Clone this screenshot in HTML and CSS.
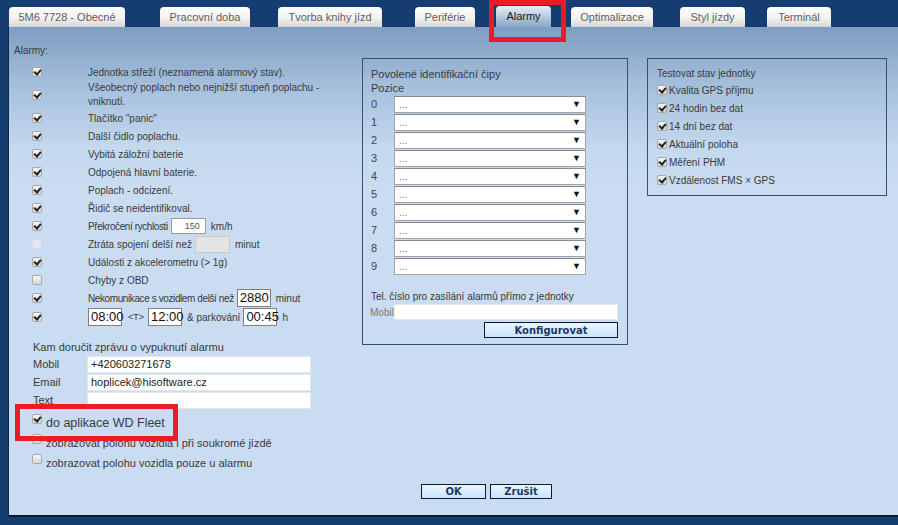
FILE: index.html
```html
<!DOCTYPE html>
<html lang="cs">
  <head>
    <meta charset="UTF-8" />
    <title>Alarmy</title>
    <link rel="stylesheet" href="styles.css">
  </head>
  <body>
    <div class="tabs">
      <div class="tab t1">5M6 7728 - Obecné</div>
      <div class="tab t2">Pracovní doba</div>
      <div class="tab t3">Tvorba knihy jízd</div>
      <div class="tab t4">Periférie</div>
      <div class="tab t5 active">Alarmy</div>
      <div class="tab t6">Optimalizace</div>
      <div class="tab t7">Styl jízdy</div>
      <div class="tab t8">Terminál</div>
    </div>
    <div class="mark mark-tab"></div>

    <div class="panel">
      <div class="content">
        <div class="col-left">
          <div class="caption">Alarmy:</div>

          <div class="row"><span class="cbc"><span class="cb on"></span></span><span>Jednotka střeží (neznamená alarmový stav).</span></div>
          <div class="row tall"><span class="cbc"><span class="cb on"></span></span><span>Všeobecný poplach nebo nejnižší stupeň poplachu -<br>vniknutí.</span></div>
          <div class="row"><span class="cbc"><span class="cb on"></span></span><span>Tlačítko "panic"</span></div>
          <div class="row"><span class="cbc"><span class="cb on"></span></span><span>Další čidlo poplachu.</span></div>
          <div class="row"><span class="cbc"><span class="cb on"></span></span><span>Vybitá záložní baterie</span></div>
          <div class="row"><span class="cbc"><span class="cb on"></span></span><span>Odpojená hlavní baterie.</span></div>
          <div class="row"><span class="cbc"><span class="cb on"></span></span><span>Poplach - odcizení.</span></div>
          <div class="row"><span class="cbc"><span class="cb on"></span></span><span>Řidič se neidentifikoval.</span></div>
          <div class="row"><span class="cbc"><span class="cb on"></span></span><span class="tight">Překročení rychlosti</span><span class="inp small">150</span><span>km/h</span></div>
          <div class="row"><span class="cbc"><span class="cb off"></span></span><span>Ztráta spojení delší než</span><span class="inp disabled"></span><span>minut</span></div>
          <div class="row"><span class="cbc"><span class="cb on"></span></span><span>Události z akcelerometru (&gt; 1g)</span></div>
          <div class="row"><span class="cbc"><span class="cb"></span></span><span>Chyby z OBD</span></div>
          <div class="row"><span class="cbc"><span class="cb on"></span></span><span class="tight">Nekomunikace s vozidlem delší než</span><span class="inp big">2880</span><span>minut</span></div>
          <div class="row times"><span class="cbc"><span class="cb on"></span></span><span class="inp big first">08:00</span><span class="tiny">&lt;T&gt;</span><span class="inp big">12:00</span><span>&amp; parkování</span><span class="inp big">00:45</span><span>h</span></div>

          <div class="notify">
            <div class="line">Kam doručit zprávu o vypuknutí alarmu</div>
            <div class="field"><span class="flabel">Mobil</span><span class="text-input">+420603271678</span></div>
            <div class="field"><span class="flabel">Email</span><span class="text-input">hoplicek@hisoftware.cz</span></div>
            <div class="field"><span class="flabel">Text</span><span class="text-input"></span></div>
            <div class="opt fleet"><span class="cb on"></span><span>do aplikace WD Fleet</span></div>
            <div class="opt"><span class="cb"></span><span>zobrazovat polohu vozidla i při soukromé jízdě</span></div>
            <div class="opt"><span class="cb"></span><span>zobrazovat polohu vozidla pouze u alarmu</span></div>
          </div>
        </div>

        <div class="box chips">
          <div class="line">Povolené identifikační čipy</div>
          <div class="line">Pozice</div>
          <div class="pos"><span class="num">0</span><div class="select"><span>...</span><span class="arrow">▼</span></div></div>
          <div class="pos"><span class="num">1</span><div class="select"><span>...</span><span class="arrow">▼</span></div></div>
          <div class="pos"><span class="num">2</span><div class="select"><span>...</span><span class="arrow">▼</span></div></div>
          <div class="pos"><span class="num">3</span><div class="select"><span>...</span><span class="arrow">▼</span></div></div>
          <div class="pos"><span class="num">4</span><div class="select"><span>...</span><span class="arrow">▼</span></div></div>
          <div class="pos"><span class="num">5</span><div class="select"><span>...</span><span class="arrow">▼</span></div></div>
          <div class="pos"><span class="num">6</span><div class="select"><span>...</span><span class="arrow">▼</span></div></div>
          <div class="pos"><span class="num">7</span><div class="select"><span>...</span><span class="arrow">▼</span></div></div>
          <div class="pos"><span class="num">8</span><div class="select"><span>...</span><span class="arrow">▼</span></div></div>
          <div class="pos"><span class="num">9</span><div class="select"><span>...</span><span class="arrow">▼</span></div></div>
          <div class="line tel">Tel. číslo pro zasílání alarmů přímo z jednotky</div>
          <div class="unit-mobil"><span class="mlabel">Mobil</span><span class="text-input"></span></div>
          <div class="cfg-row"><button class="btn cfg">Konfigurovat</button></div>
        </div>

        <div class="box tests">
          <div class="line">Testovat stav jednotky</div>
          <div class="test"><span class="cb on"></span><span>Kvalita GPS příjmu</span></div>
          <div class="test"><span class="cb on"></span><span>24 hodin bez dat</span></div>
          <div class="test"><span class="cb on"></span><span>14 dní bez dat</span></div>
          <div class="test"><span class="cb on"></span><span>Aktuální poloha</span></div>
          <div class="test"><span class="cb on"></span><span>Měření PHM</span></div>
          <div class="test"><span class="cb on"></span><span>Vzdálenost FMS × GPS</span></div>
        </div>
      </div>

      <div class="footer">
        <button class="btn ok">OK</button>
        <button class="btn cancel">Zrušit</button>
      </div>
    </div>
    <div class="mark mark-fleet"></div>
  </body>
</html>
```

FILE: styles.css
```css
body {
  margin: 0;
  background-color: #153d6f;
  font-family: "Liberation Sans", Arial, sans-serif;
  font-size: 11px;
  color: #3a3a3a;
  height: 525px;
  overflow: hidden;
  position: relative;
}

/* zalozky */
.tabs {
  display: flex;
  align-items: flex-end;
  height: 27px;
  padding-left: 9px;
  box-sizing: border-box;
}

.tab {
  height: 20px;
  line-height: 21px;
  text-align: center;
  font-size: 11px;
  color: #5f5f5f;
  background: linear-gradient(#ffffff, #f2f2f2 55%, #d6d6d6);
  border-radius: 4px 4px 0 0;
  box-sizing: border-box;
}

.t1 { width: 116px; }
.t2 { width: 90px; margin-left: 35px; }
.t3 { width: 104px; margin-left: 28px; }
.t4 { width: 60px; margin-left: 33px; }
.t5 { width: 55px; margin-left: 21px; }
.t6 { width: 82px; margin-left: 20px; }
.t7 { width: 65px; margin-left: 27px; }
.t8 { width: 64px; margin-left: 22px; }

.tab.active {
  color: #1a1a1a;
  height: 21px;
  background: linear-gradient(#e6eef6, #b7cbe0 50%, #86a5c6);
}

.mark {
  position: absolute;
  border: 5px solid #ec1c24;
  box-sizing: border-box;
}

.mark-tab {
  left: 489px;
  top: 0;
  width: 77px;
  height: 42px;
}

.mark-fleet {
  left: 15px;
  top: 404px;
  width: 163px;
  height: 37px;
}

/* panel */
.panel {
  margin-left: 8px;
  height: 488px;
  border-left: 1px solid #0d2746;
  border-bottom: 2px solid #081a33;
  background: linear-gradient(#7e9ec1 0, #a6c0dc 60px, #c4d8ee 120px, #c9dcf1 160px, #c9dcf1);
  display: flex;
  flex-direction: column;
}

.content {
  display: flex;
  align-items: flex-start;
}

.col-left {
  width: 353px;
  padding-top: 17px;
}

.caption {
  padding-left: 5px;
  height: 19px;
  line-height: 14px;
  font-size: 10px;
}

.row {
  display: flex;
  align-items: center;
  height: 18px;
  white-space: nowrap;
  font-size: 10px;
}

.row.tall {
  height: 28px;
  line-height: 14px;
}

.row.times {
  height: 20px;
}

.tight {
  letter-spacing: -0.4px;
}

.cbc {
  width: 56px;
  padding-left: 23px;
  display: flex;
}

.cb {
  display: inline-block;
  position: relative;
  width: 10px;
  height: 10px;
  border: 1px solid #a8a8a8;
  border-radius: 2px;
  background: linear-gradient(#f6f6f6, #d7d7d7);
  box-sizing: border-box;
  flex: none;
}

.cb.on::after {
  content: "";
  position: absolute;
  left: 2px;
  top: 0px;
  width: 3px;
  height: 5px;
  border-right: 2px solid #222;
  border-bottom: 2px solid #222;
  transform: rotate(40deg);
}

.cb.off {
  border-color: #d4dde8;
  background: #dfe7f0;
}

.inp {
  display: inline-block;
  box-sizing: border-box;
  background: #fff;
  border: 1px solid #9a9a9a;
  margin: 0 5px 0 3px;
}

.inp.small {
  width: 35px;
  height: 16px;
  font-size: 9px;
  line-height: 14px;
  text-align: right;
  padding-right: 5px;
  color: #555;
}

.inp.disabled {
  width: 35px;
  height: 17px;
  background: #e4e4e4;
  border-color: #c8c8c8;
}

.inp.big {
  width: 34px;
  height: 18px;
  font-size: 13px;
  line-height: 16px;
  padding-left: 2px;
  color: #111;
  border-color: #808080;
}

.inp.big.first {
  margin-left: 0;
  margin-right: 6px;
}

.tiny {
  font-size: 9px;
  margin-right: 1px;
}

.notify {
  margin-top: 13px;
  padding-left: 24px;
}

.line {
  height: 14px;
  line-height: 14px;
}

.notify .line {
  height: 15px;
}

.field {
  display: flex;
  align-items: center;
  height: 18px;
}

.flabel {
  width: 54px;
}

.text-input {
  display: block;
  width: 224px;
  height: 17px;
  line-height: 15px;
  background: #fff;
  border: 1px solid #e4e8ee;
  box-sizing: border-box;
  padding-left: 3px;
  color: #222;
}

.opt {
  display: flex;
  align-items: flex-start;
  gap: 4px;
  height: 20px;
  margin-left: -1px;
}

.notify .field + .opt {
  margin-top: 5px;
}

.opt span:last-child {
  padding-top: 3px;
}

.opt.fleet span:last-child {
  font-size: 12.5px;
  padding-top: 2px;
}

/* ramecky */
.box {
  margin-top: 31px;
  border: 1px solid #34506d;
  box-sizing: border-box;
  padding: 8px 0 0 8px;
}

.chips {
  width: 266px;
  height: 287px;
}

.pos {
  display: flex;
  align-items: center;
  height: 18px;
}

.num {
  width: 23px;
  color: #444;
}

.select {
  width: 192px;
  height: 17px;
  box-sizing: border-box;
  background: #fff;
  border: 1px solid #a3a3a3;
  border-top-color: #888;
  display: flex;
  justify-content: space-between;
  align-items: center;
  padding: 0 4px;
  color: #777;
  font-size: 10px;
}

.select .arrow {
  color: #111;
  font-size: 9px;
}

.tel {
  margin-top: 15px;
  font-size: 10px;
}

.unit-mobil {
  display: flex;
  align-items: center;
  height: 16px;
}

.mlabel {
  width: 24px;
  margin-left: -1px;
  color: #777;
  font-size: 10px;
}

.unit-mobil .text-input {
  height: 16px;
}

.cfg-row {
  display: flex;
  justify-content: flex-end;
  padding-right: 9px;
  margin-top: 2px;
}

.tests {
  width: 240px;
  height: 138px;
  margin-left: 19px;
  padding-left: 9px;
}

.tests .line {
  font-size: 10px;
}

.test {
  display: flex;
  align-items: center;
  gap: 2px;
  height: 18px;
  font-size: 10px;
}

.btn {
  font-family: "DejaVu Sans", Verdana, sans-serif;
  font-weight: bold;
  font-size: 10px;
  color: #1b3966;
  background: linear-gradient(#eaf5ff, #c9e4fb);
  border: 1px solid #0d1b2b;
  height: 16px;
  padding: 0;
  margin: 0;
}

.cfg {
  width: 134px;
}

.footer {
  margin-top: auto;
  padding: 0 0 16px 412px;
  display: flex;
  gap: 4px;
}

.ok {
  width: 65px;
  height: 15px;
}

.cancel {
  width: 62px;
  height: 15px;
}
```
